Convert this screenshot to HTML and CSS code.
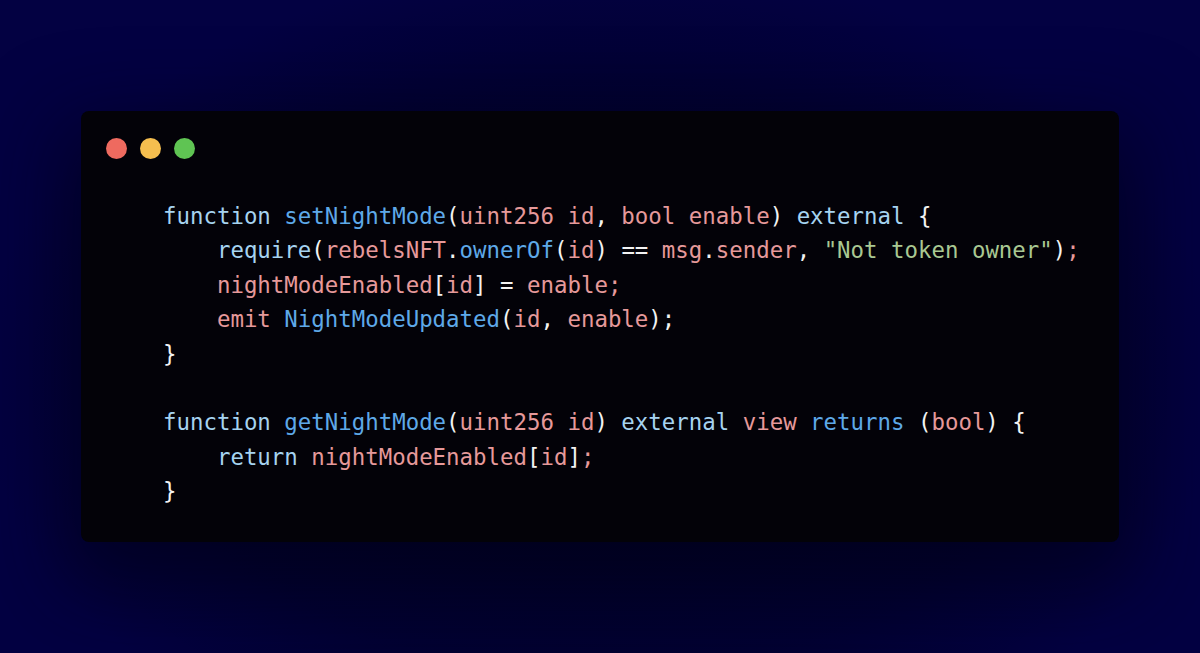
FILE: index.html
```html
<!DOCTYPE html>
<html lang="en">
<head>
<meta charset="utf-8">
<title>Code snippet</title>
<link rel="stylesheet" href="styles.css">
</head>
<body>
<div class="stage">
  <div class="window">
    <div class="dots">
      <span class="dot red"></span>
      <span class="dot yellow"></span>
      <span class="dot green"></span>
    </div>
<pre class="code"><span class="kw">function</span> <span class="fn">setNightMode</span><span class="p">(</span><span class="id">uint256 id</span><span class="p">,</span> <span class="id">bool enable</span><span class="p">)</span> <span class="kw">external</span> <span class="p">{</span>
    <span class="kw">require</span><span class="p">(</span><span class="id">rebelsNFT</span><span class="p">.</span><span class="fn">ownerOf</span><span class="p">(</span><span class="id">id</span><span class="p">) ==</span> <span class="id">msg</span><span class="p">.</span><span class="id">sender</span><span class="p">,</span> <span class="str">"Not token owner"</span><span class="p">)</span><span class="id">;</span>
    <span class="id">nightModeEnabled</span><span class="p">[</span><span class="id">id</span><span class="p">] =</span> <span class="id">enable;</span>
    <span class="id">emit</span> <span class="fn">NightModeUpdated</span><span class="p">(</span><span class="id">id</span><span class="p">,</span> <span class="id">enable</span><span class="p">);</span>
<span class="p">}</span>

<span class="kw">function</span> <span class="fn">getNightMode</span><span class="p">(</span><span class="id">uint256 id</span><span class="p">)</span> <span class="kw">external</span> <span class="id">view</span> <span class="fn">returns</span> <span class="p">(</span><span class="id">bool</span><span class="p">) {</span>
    <span class="kw">return</span> <span class="id">nightModeEnabled</span><span class="p">[</span><span class="id">id</span><span class="p">]</span><span class="id">;</span>
<span class="p">}</span></pre>
  </div>
</div>
</body>
</html>
```
FILE: styles.css
```css
html, body {
  margin: 0;
  padding: 0;
}
body {
  width: 1200px;
  height: 653px;
  overflow: hidden;
  background: #030142;
}
.stage {
  height: 653px;
  padding: 111px 81px 0;
  box-sizing: border-box;
  background: radial-gradient(ellipse 620px 420px at 600px 380px, rgba(1,0,30,0.9), rgba(1,0,40,0.6) 70%, rgba(2,1,60,0) 100%);
}
.window {
  height: 431px;
  background: #030208;
  border-radius: 8px;
  box-sizing: border-box;
  padding: 27px 25px 0;
  box-shadow: 0 30px 80px 20px rgba(0,0,20,0.55);
}
.dots {
  display: flex;
  gap: 13px;
}
.dot {
  width: 21px;
  height: 21px;
  border-radius: 50%;
}
.red { background: #ee6a5f; }
.yellow { background: #f5be4f; }
.green { background: #5fc453; }
.code {
  margin: 40px 0 0 57px;
  font-family: "DejaVu Sans Mono", "Liberation Mono", monospace;
  font-size: 22.4px;
  line-height: 34.4px;
  color: #f2f2f2;
}
.kw { color: #a6d3f0; }
.fn { color: #5ea9e8; }
.id { color: #e6999a; }
.str { color: #a9c892; }
.p { color: #f2f2f2; }
```
